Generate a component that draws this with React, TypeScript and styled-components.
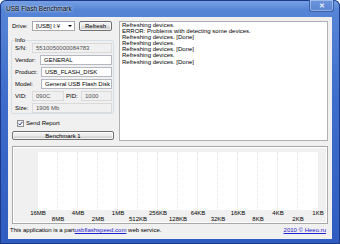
import React from 'react';
import styled, { createGlobalStyle } from 'styled-components';

const Global = createGlobalStyle`
  html, body { margin: 0; padding: 0; background: #ffffff; }
  body { font-family: "Liberation Sans", Arial, sans-serif; color: #000; }
  * { box-sizing: border-box; }
`;

const Window = styled.div`
  width: 340px;
  height: 244px;
  display: flex;
  flex-direction: column;
  background: linear-gradient(180deg, #7aa3e6 0px, #5685d6 10px, #3e6dcb 40%, #2f5cc0 100%);
  border-radius: 6px 6px 0 0;
  box-shadow: inset 0 0 0 1px #1c3a88;
  overflow: hidden;
`;

const TitleBar = styled.div`
  height: 17px;
  flex: none;
  display: flex;
  justify-content: space-between;
  align-items: flex-start;
`;

const Title = styled.div`
  margin: 5px 0 0 6px;
  font-size: 6.5px;
  line-height: 8px;
  color: #000;
  text-shadow: 0 0 3px #dce9fb, 0 0 2px #dce9fb;
`;

const CloseBtn = styled.div`
  width: 25px;
  height: 12px;
  margin-right: 6px;
  border: 1px solid #3b5fa8;
  border-top: none;
  border-radius: 0 0 3px 3px;
  background: linear-gradient(180deg, #6d96dd, #5a84d2);
  box-shadow: inset 0 0 0 1px rgba(255,255,255,0.35);
  display: flex;
  align-items: center;
  justify-content: center;
  color: #e8eef8;
  font-size: 7px;
  font-weight: bold;
  line-height: 1;
`;

const Client = styled.div`
  flex: 1;
  margin: 0 8px 5px 8px;
  background: #f0f0f0;
  padding: 4px 4px 0 3px;
  display: flex;
  flex-direction: column;
  font-size: 6px;
`;

const Top = styled.div`
  display: flex;
  height: 120px;
`;

const LeftCol = styled.div`
  width: 103px;
  display: flex;
  flex-direction: column;
`;

const DriveRow = styled.div`
  height: 10px;
  display: flex;
  align-items: center;
`;

const DriveLabel = styled.span`
  width: 21px;
  padding-left: 1px;
  line-height: 6px;
`;

const Select = styled.div`
  width: 43px;
  height: 10px;
  background: #fff;
  border: 1px solid #a9a9a9;
  display: flex;
  align-items: center;
  justify-content: space-between;
  padding: 0 2px 0 3px;
  line-height: 6px;
`;

const Arrow = styled.span`
  width: 0;
  height: 0;
  border-left: 2px solid transparent;
  border-right: 2px solid transparent;
  border-top: 2px solid #000;
`;

const Button = styled.div<{ $w?: number }>`
  ${p => (p.$w ? `width: ${p.$w}px;` : '')}
  height: ${p => (p.$w ? 10 : 9)}px;
  border: 1px solid #707070;
  border-radius: 2px;
  background: linear-gradient(180deg, #f3f3f3 0%, #ebebeb 50%, #dddddd 51%, #cfcfcf 100%);
  box-shadow: inset 0 0 0 1px rgba(255,255,255,0.7);
  display: flex;
  align-items: center;
  justify-content: center;
  line-height: 6px;
`;

const RefreshBtn = styled(Button)`
  margin-left: 4px;
`;

const Group = styled.fieldset`
  margin: 6px 0 0 0;
  padding: 0 1px 0 3px;
  min-width: 0;
  border: 1px solid #d5dfe5;
  border-radius: 2px;
  display: flex;
  flex-direction: column;
  gap: 2px;
`;

const Legend = styled.legend`
  padding: 0;
  margin-left: 0;
  font-size: 6px;
  line-height: 6px;
  float: none;
`;

const Row = styled.div`
  height: 10px;
  display: flex;
  align-items: center;
`;

const Label = styled.span<{ $w: number; $pad?: number }>`
  width: ${p => p.$w}px;
  padding-left: ${p => p.$pad ?? 0}px;
  flex: none;
  line-height: 6px;
`;

const Field = styled.div<{ $ro?: boolean; $w?: number }>`
  ${p => (p.$w ? `width: ${p.$w}px; flex: none;` : 'flex: 1;')}
  height: 10px;
  border: 1px solid ${p => (p.$ro ? '#dadada' : '#b5b8c0')};
  background: ${p => (p.$ro ? '#f0f0f0' : '#ffffff')};
  color: ${p => (p.$ro ? '#505050' : '#000')};
  padding-left: 3px;
  display: flex;
  align-items: center;
  line-height: 6px;
  white-space: nowrap;
  overflow: hidden;
`;

const CheckRow = styled.div`
  margin-top: 4px;
  height: 10px;
  display: flex;
  align-items: center;
  padding-left: 6px;
  gap: 2px;
  line-height: 6px;
`;

const CheckBox = styled.span`
  width: 7px;
  height: 7px;
  border: 1px solid #8e8f8f;
  background: linear-gradient(135deg, #e6e6e6, #ffffff);
  display: flex;
  align-items: center;
  justify-content: center;
`;

const BenchBtn = styled(Button)`
  margin: 3px 0 0 1px;
  width: 102px;
`;

const Log = styled.div`
  flex: 1;
  margin-left: 5px;
  background: #fff;
  border: 1px solid #b0b0b0;
  padding: 0 2px;
  line-height: 6.1px;
  font-size: 6px;
  white-space: pre;
`;

const Chart = styled.div`
  margin: 5px 0 0 1px;
  height: 78px;
  border: 1px solid #a8a8a8;
  box-shadow: inset 0 0 0 1px #ffffff;
  background: #f0f0f0;
  padding-top: 5px;
  display: flex;
  flex-direction: column;
`;

const Bars = styled.div`
  margin-left: 25px;
  display: grid;
  grid-template-columns: repeat(14, 20px);
  height: 58px;
`;

const Bar = styled.div<{ $last?: boolean }>`
  background: #ffffff;
  border-right: ${p => (p.$last ? 'none' : '1px dotted #e2e2e2')};
`;

const Axis = styled.div`
  margin-left: 15px;
  display: grid;
  grid-template-columns: repeat(15, 20px);
  grid-template-rows: 6px 6px;
`;

const Tick = styled.span<{ $col: number; $row: number }>`
  grid-column: ${p => p.$col};
  grid-row: ${p => p.$row};
  justify-self: center;
  white-space: nowrap;
  font-size: 6px;
  line-height: 6px;
`;

const Status = styled.div`
  margin: 2px 2px 0 -1px;
  display: flex;
  justify-content: space-between;
  line-height: 8px;
  font-size: 6px;
`;

const Link = styled.span`
  color: #2222cc;
  text-decoration: underline;
`;

const logLines = [
  'Refreshing devices.',
  'ERROR: Problems with detecting some devices.',
  'Refreshing devices. [Done]',
  'Refreshing devices.',
  'Refreshing devices. [Done]',
  'Refreshing devices.',
  'Refreshing devices. [Done]',
];

const ticks = ['16MB', '8MB', '4MB', '2MB', '1MB', '512KB', '256KB', '128KB', '64KB', '32KB', '16KB', '8KB', '4KB', '2KB', '1KB'];

export default function App() {
  return (
    <>
      <Global />
      <Window>
        <TitleBar>
          <Title>USB Flash Benchmark</Title>
          <CloseBtn>✕</CloseBtn>
        </TitleBar>
        <Client>
          <Top>
            <LeftCol>
              <DriveRow>
                <DriveLabel>Drive:</DriveLabel>
                <Select>
                  <span>[USB] I:¥</span>
                  <Arrow />
                </Select>
                <RefreshBtn $w={33}>Refresh</RefreshBtn>
              </DriveRow>
              <Group>
                <Legend>Info</Legend>
                <Row>
                  <Label $w={17}>S/N:</Label>
                  <Field $ro>5510050000084783</Field>
                </Row>
                <Row>
                  <Label $w={25}>Vendor:</Label>
                  <Field>GENERAL</Field>
                </Row>
                <Row>
                  <Label $w={26}>Product:</Label>
                  <Field>USB_FLASH_DISK</Field>
                </Row>
                <Row>
                  <Label $w={26}>Model:</Label>
                  <Field>General USB Flash Disk</Field>
                </Row>
                <Row>
                  <Label $w={17}>VID:</Label>
                  <Field $ro $w={32}>090C</Field>
                  <Label $w={17} $pad={2}>PID:</Label>
                  <Field $ro>1000</Field>
                </Row>
                <Row>
                  <Label $w={17}>Size:</Label>
                  <Field $ro>1906 Mb</Field>
                </Row>
              </Group>
              <CheckRow>
                <CheckBox>
                  <svg width="5" height="5" viewBox="0 0 5 5">
                    <path d="M0.5 2.6 L1.9 4 L4.5 0.8" fill="none" stroke="#2a3f8a" strokeWidth="1" />
                  </svg>
                </CheckBox>
                <span>Send Report</span>
              </CheckRow>
              <BenchBtn>Benchmark 1</BenchBtn>
            </LeftCol>
            <Log>{logLines.join('\n')}</Log>
          </Top>
          <Chart>
            <Bars>
              {Array.from({ length: 14 }).map((_, i) => (
                <Bar key={i} $last={i === 13} />
              ))}
            </Bars>
            <Axis>
              {ticks.map((t, i) => (
                <Tick key={t} $col={i + 1} $row={(i % 2) + 1}>
                  {t}
                </Tick>
              ))}
            </Axis>
          </Chart>
          <Status>
            <span>
              This application is a part<Link>usbflashspeed.com</Link> web service.
            </span>
            <Link>2010 © Heeo.ru</Link>
          </Status>
        </Client>
      </Window>
    </>
  );
}
